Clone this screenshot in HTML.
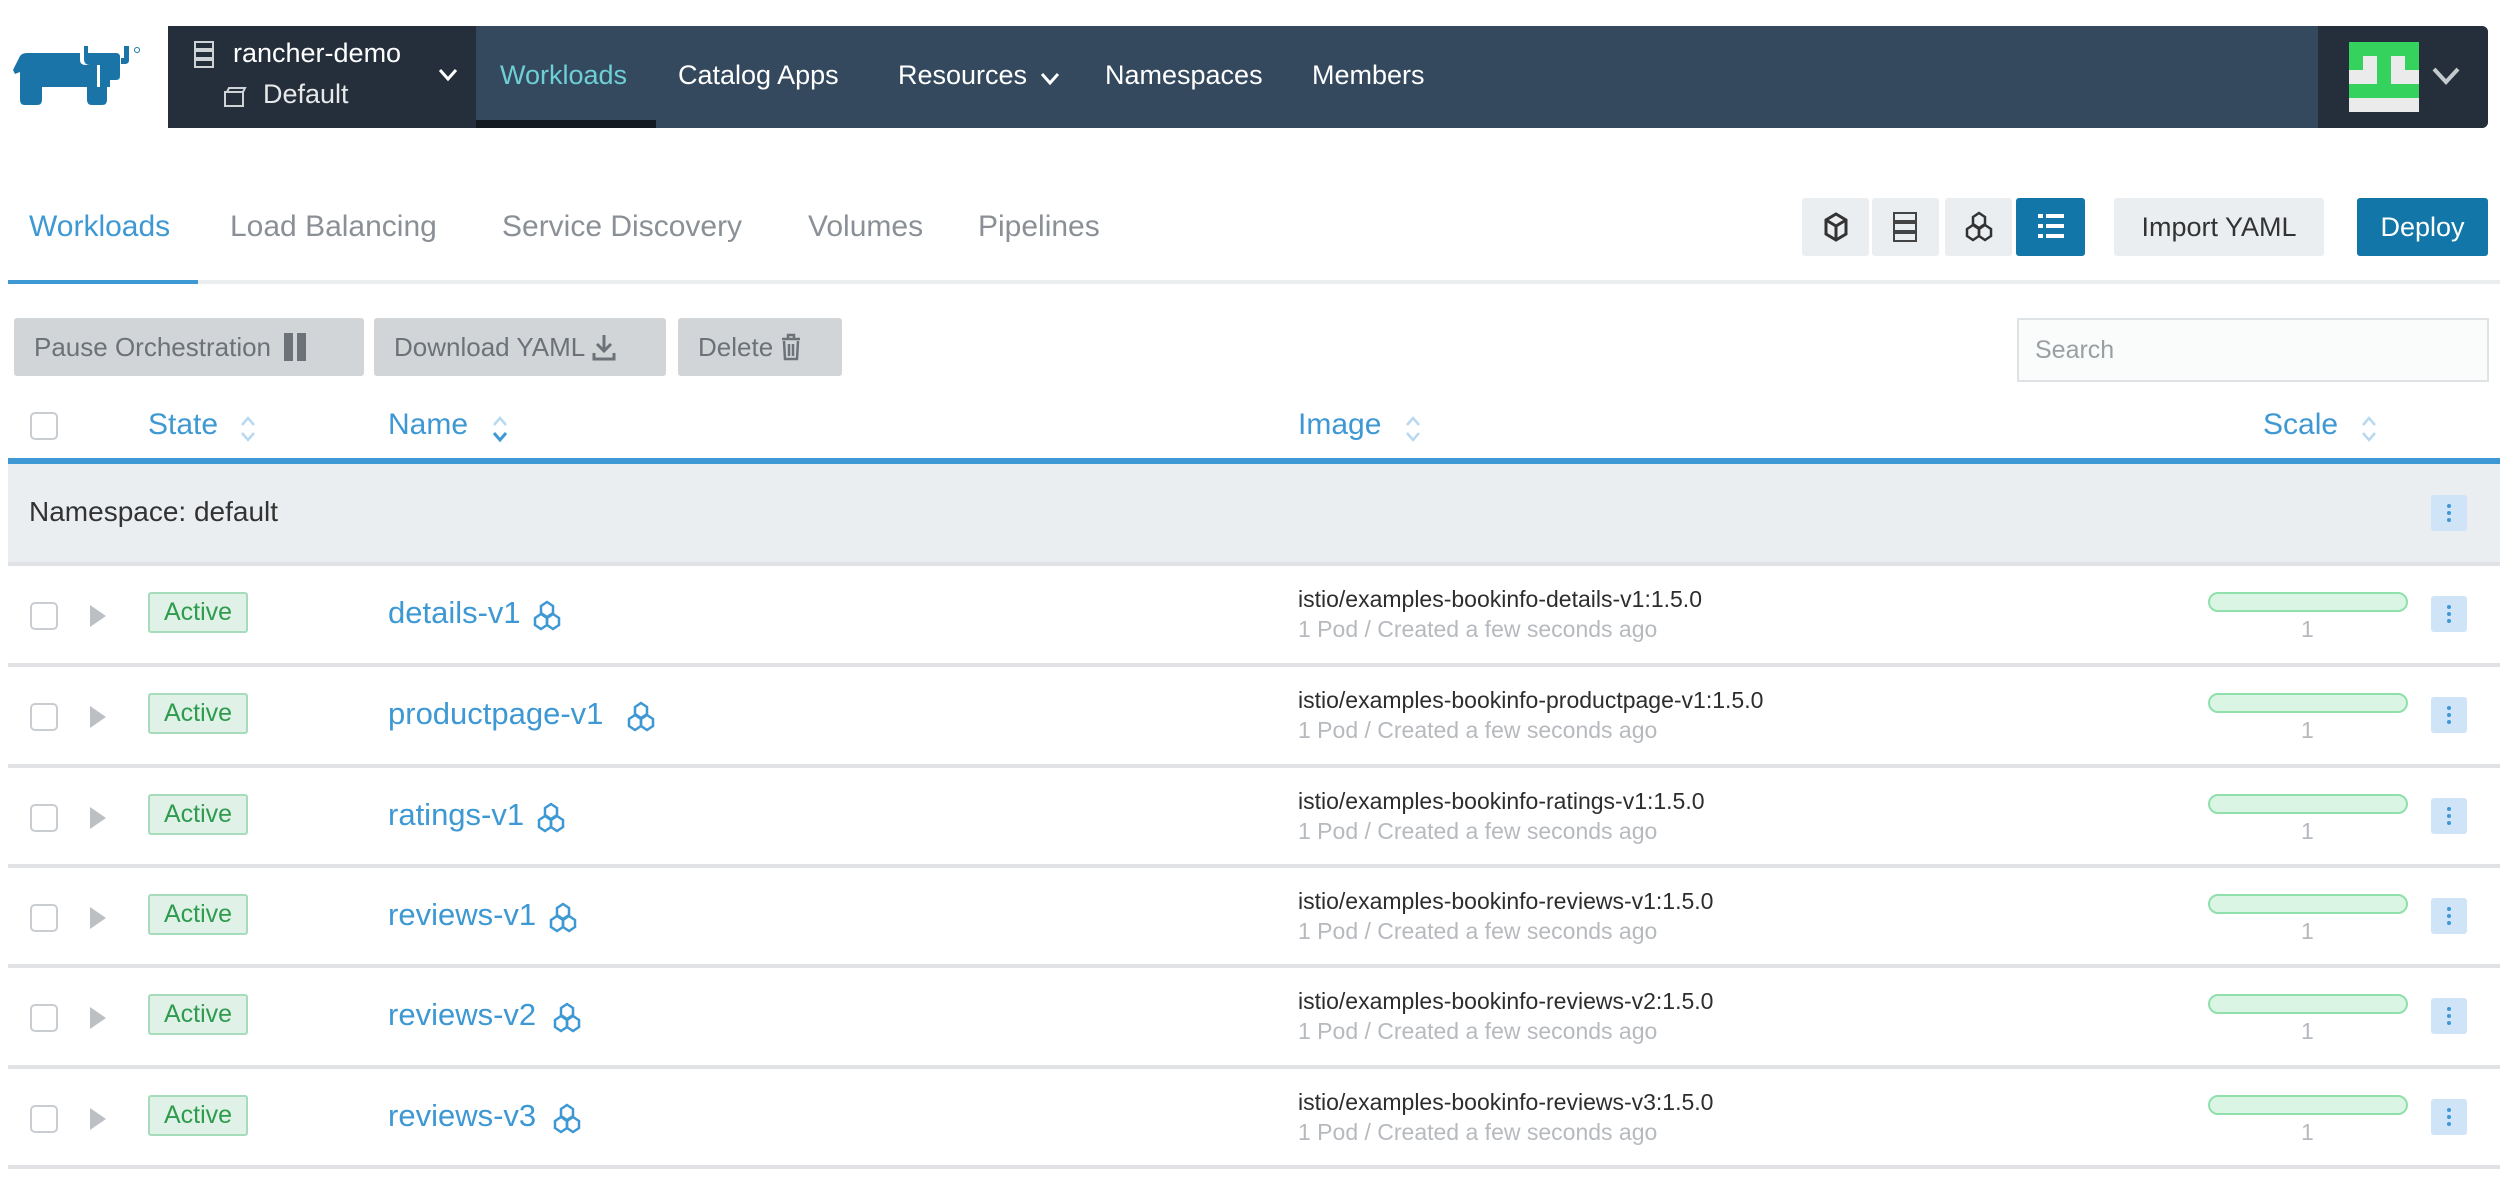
<!DOCTYPE html>
<html><head><meta charset="utf-8"><style>
*{box-sizing:border-box;margin:0;padding:0}
body{width:2500px;height:1186px;background:#fff;font-family:"Liberation Sans",sans-serif;position:relative;overflow:hidden}
.a{position:absolute;white-space:nowrap}
.nav{color:#fff;font-size:27px}
.tab{font-size:30px;color:#8b9096;top:210px}
.btn{background:#d2d5d8;border-radius:3px;color:#6c7278;font-size:26px;top:318px;height:58px;line-height:58px;padding-left:20px}
.hd{font-size:30px;color:#3d98d3;top:408px}
.cb{width:28px;height:28px;border:2px solid #c9cdd1;border-radius:5px;background:#fff}
.sep{left:8px;right:0;height:4px;background:#e0e2e5}
.badge{background:#e0f2e7;border:2px solid #a6dcbb;color:#2e9b4e;font-size:25px;border-radius:3px;width:100px;height:41px;line-height:37px;text-align:center}
.name{font-size:31px;color:#3d98d3}
.img{font-size:23px;color:#2d2d2d}
.sub{font-size:23px;color:#b6babe}
.bar{width:200px;height:20px;border:2px solid #8fe0ab;background:#dbf5e4;border-radius:10px}
.menu{width:36px;height:36px;background:#cfe4f6;border-radius:3px}
.menu i{position:absolute;left:16px;width:4px;height:4px;border-radius:2px;background:#3d98d3}
.tri{width:0;height:0;border-left:16px solid #bcc0c4;border-top:11px solid transparent;border-bottom:11px solid transparent}
.ic{background:#ebeef0;top:198px;height:58px;width:67px;border-radius:3px}
</style></head><body>
<!-- logo -->
<svg class="a" style="left:0;top:30px" width="160" height="90" viewBox="0 0 160 90">
<path fill="#1a74a8" d="M13 40 L20 26 Q22 23 27 23 L80 23 L80 30 Q80 35 86 35 L97 35 L97 57 L107 57 L107 70 Q107 75 102 75 L92 75 Q87 75 87 70 L87 57 L42 57 L42 70 Q42 75 37 75 L25 75 Q20 75 20 70 L20 42 L15 44 Z"/>
<path fill="#1a74a8" d="M84 16 L88 16 L88 23 L116 23 Q120 23 120 27 L120 46 Q120 50 116 50 L110 50 L110 57 L100 57 L100 35 L90 35 Q84 35 84 29 Z"/>
<path fill="#1a74a8" d="M124 16 L129 16 L129 30 Q129 34 125 34 L121 34 L121 28 L124 28 Z"/>
<circle cx="137" cy="20" r="2.5" fill="none" stroke="#1a74a8" stroke-width="1"/>
</svg>
<!-- navbar -->
<div class="a" style="left:168px;top:26px;width:2320px;height:102px;background:#34495e;border-radius:0 6px 6px 0"></div>
<div class="a" style="left:168px;top:26px;width:308px;height:102px;background:#242f3b"></div>
<div class="a" style="left:476px;top:120px;width:180px;height:8px;background:#141a21"></div>
<div class="a" style="left:2318px;top:26px;width:170px;height:102px;background:#242f3b;border-radius:0 6px 6px 0"></div>
<svg class="a" style="left:193px;top:40px" width="22" height="30" viewBox="0 0 22 30"><g fill="none" stroke="#cfd3d6" stroke-width="2"><rect x="2" y="2" width="18" height="7"/><rect x="2" y="11" width="18" height="7"/><rect x="2" y="20" width="18" height="7"/></g></svg>
<div class="a nav" style="left:233px;top:38px">rancher-demo</div>
<svg class="a" style="left:222px;top:86px" width="26" height="22" viewBox="0 0 26 22"><path d="M3 6 L3 20 L21 20 L21 6 Z M5 6 L7 2 L23 2 L21 6" fill="none" stroke="#cfd3d6" stroke-width="2"/></svg>
<div class="a nav" style="left:263px;top:79px;color:#e6e8ea">Default</div>
<svg class="a" style="left:438px;top:68px" width="20" height="14"><path d="M2 2 L10 11 L18 2" fill="none" stroke="#fff" stroke-width="3"/></svg>
<div class="a nav" style="left:500px;top:60px;color:#6ecfd6">Workloads</div>
<div class="a nav" style="left:678px;top:60px">Catalog Apps</div>
<div class="a nav" style="left:898px;top:60px">Resources</div>
<svg class="a" style="left:1040px;top:72px" width="20" height="14"><path d="M2 2 L10 11 L18 2" fill="none" stroke="#fff" stroke-width="3"/></svg>
<div class="a nav" style="left:1105px;top:60px">Namespaces</div>
<div class="a nav" style="left:1312px;top:60px">Members</div>
<div class="a" style="left:2349px;top:42px;width:70px;height:70px;background:#35d25e"></div>
<div class="a" style="left:2349px;top:98px;width:70px;height:14px;background:#ebebeb"></div>
<div class="a" style="left:2349px;top:70px;width:70px;height:14px;background:#ebebeb"></div>
<div class="a" style="left:2363px;top:56px;width:14px;height:28px;background:#ebebeb"></div>
<div class="a" style="left:2391px;top:56px;width:14px;height:28px;background:#ebebeb"></div>
<div class="a" style="left:2377px;top:70px;width:14px;height:14px;background:#35d25e"></div>
<svg class="a" style="left:2431px;top:66px" width="30" height="20"><path d="M3 3 L15 16 L27 3" fill="none" stroke="#c4c9cd" stroke-width="4"/></svg>
<!-- tabs -->
<div class="a tab" style="left:29px;color:#3d98d3">Workloads</div>
<div class="a tab" style="left:230px">Load Balancing</div>
<div class="a tab" style="left:502px">Service Discovery</div>
<div class="a tab" style="left:808px">Volumes</div>
<div class="a tab" style="left:978px">Pipelines</div>
<div class="a" style="left:8px;top:280px;width:2492px;height:4px;background:#ebeeef"></div>
<div class="a" style="left:8px;top:280px;width:190px;height:4px;background:#3d98d3"></div>
<!-- right buttons -->
<div class="a ic" style="left:1802px"></div>
<svg class="a" style="left:1822px;top:211px" width="28" height="32" viewBox="0 0 28 32"><path d="M14 3 L24 9 L24 23 L14 29 L4 23 L4 9 Z M4 9 L14 15 L24 9 M14 15 L14 29" fill="none" stroke="#333" stroke-width="3"/></svg>
<div class="a ic" style="left:1872px"></div>
<svg class="a" style="left:1892px;top:211px" width="26" height="32" viewBox="0 0 26 32"><g fill="none" stroke="#444" stroke-width="2"><rect x="2" y="2" width="22" height="8"/><rect x="2" y="12" width="22" height="8"/><rect x="2" y="22" width="22" height="8"/></g></svg>
<div class="a ic" style="left:1945px"></div>
<svg class="a" style="left:1964px;top:211px" width="30" height="32" viewBox="0 0 30 32"><g fill="none" stroke="#333" stroke-width="2.5"><path d="M15 2 L21 6 L21 13 L15 17 L9 13 L9 6 Z"/><path d="M9 14 L15 18 L15 25 L9 29 L3 25 L3 18 Z"/><path d="M21 14 L27 18 L27 25 L21 29 L15 25 L15 18 Z"/></g></svg>
<div class="a" style="left:2016px;top:198px;width:69px;height:58px;background:#1277a8;border-radius:3px"></div>
<svg class="a" style="left:2036px;top:212px" width="30" height="30" viewBox="0 0 30 30"><g fill="#fff"><rect x="2" y="2" width="5" height="4"/><rect x="10" y="2" width="18" height="4"/><rect x="2" y="12" width="5" height="4"/><rect x="10" y="12" width="18" height="4"/><rect x="2" y="22" width="5" height="4"/><rect x="10" y="22" width="18" height="4"/></g></svg>
<div class="a" style="left:2114px;top:198px;width:210px;height:58px;background:#ebeef0;border-radius:3px;font-size:27px;color:#333;line-height:58px;text-align:center">Import YAML</div>
<div class="a" style="left:2357px;top:198px;width:131px;height:58px;background:#1277a8;border-radius:3px;font-size:27px;color:#fff;line-height:58px;text-align:center">Deploy</div>
<!-- action buttons -->
<div class="a btn" style="left:14px;width:350px">Pause Orchestration <span style="display:inline-block;width:9px;height:28px;background:#6c7278;vertical-align:-5px;margin-left:6px"></span><span style="display:inline-block;width:9px;height:28px;background:#6c7278;vertical-align:-5px;margin-left:4px"></span></div>
<div class="a btn" style="left:374px;width:292px">Download YAML <svg width="24" height="28" style="vertical-align:-5px"><path d="M12 2 L12 18 M5 11 L12 18 L19 11 M2 20 L2 26 L22 26 L22 20" fill="none" stroke="#6c7278" stroke-width="3"/></svg></div>
<div class="a btn" style="left:678px;width:164px">Delete <svg width="22" height="28" style="vertical-align:-5px"><path d="M2 6 L20 6 M8 6 L8 2 L14 2 L14 6 M4 8 L5 26 L17 26 L18 8 M9 11 L9 23 M13 11 L13 23" fill="none" stroke="#6c7278" stroke-width="2.5"/></svg></div>
<div class="a" style="left:2017px;top:318px;width:472px;height:64px;border:2px solid #dfe3e6;background:#fafbfb;font-size:25px;color:#9a9fa4;padding:16px 16px">Search</div>
<!-- header -->
<div class="a cb" style="left:30px;top:412px"></div>
<div class="a hd" style="left:148px">State</div>
<div class="a hd" style="left:388px">Name</div>
<div class="a hd" style="left:1298px">Image</div>
<div class="a hd" style="left:2263px">Scale</div>
<svg class="a" style="left:240px;top:414px" width="16" height="30"><path d="M2 11 L8 4 L14 11 M2 19 L8 26 L14 19" fill="none" stroke="#b8d9f0" stroke-width="2.5"/></svg>
<svg class="a" style="left:492px;top:414px" width="16" height="30"><path d="M2 11 L8 4 L14 11" fill="none" stroke="#b8d9f0" stroke-width="2.5"/><path d="M2 19 L8 26 L14 19" fill="none" stroke="#3d98d3" stroke-width="3"/></svg>
<svg class="a" style="left:1405px;top:414px" width="16" height="30"><path d="M2 11 L8 4 L14 11 M2 19 L8 26 L14 19" fill="none" stroke="#b8d9f0" stroke-width="2.5"/></svg>
<svg class="a" style="left:2361px;top:414px" width="16" height="30"><path d="M2 11 L8 4 L14 11 M2 19 L8 26 L14 19" fill="none" stroke="#b8d9f0" stroke-width="2.5"/></svg>
<div class="a" style="left:8px;top:458px;width:2492px;height:6px;background:#3d98d3"></div>
<div class="a" style="left:8px;top:464px;width:2492px;height:98px;background:#ebeef0"></div>
<div class="a" style="left:29px;top:496px;font-size:28px;color:#333">Namespace: default</div>
<div class="a menu" style="left:2431px;top:495px"><i style="top:9px"></i><i style="top:16px"></i><i style="top:23px"></i></div>

<div id="rows"></div>
<script>
var tops=[562,663,764,864,964,1065];
var names=["details-v1","productpage-v1","ratings-v1","reviews-v1","reviews-v2","reviews-v3"];
var nw=[136,230,140,152,156,156];
var h="";
for(var i=0;i<6;i++){var t=tops[i];
h+='<div class="a sep" style="top:'+t+'px"></div>';
h+='<div class="a cb" style="left:30px;top:'+(t+40)+'px"></div>';
h+='<div class="a tri" style="left:90px;top:'+(t+43)+'px"></div>';
h+='<div class="a badge" style="left:148px;top:'+(t+30)+'px">Active</div>';
h+='<div class="a name" style="left:388px;top:'+(t+33)+'px">'+names[i]+'</div>';
h+='<svg class="a" style="left:'+(388+nw[i]+8)+'px;top:'+(t+38)+'px" width="30" height="32" viewBox="0 0 30 32"><g fill="none" stroke="#3d98d3" stroke-width="2.5"><path d="M15 2 L21 6 L21 13 L15 17 L9 13 L9 6 Z"/><path d="M9 14 L15 18 L15 25 L9 29 L3 25 L3 18 Z"/><path d="M21 14 L27 18 L27 25 L21 29 L15 25 L15 18 Z"/></g></svg>';
h+='<div class="a img" style="left:1298px;top:'+(t+24)+'px">istio/examples-bookinfo-'+names[i]+':1.5.0</div>';
h+='<div class="a sub" style="left:1298px;top:'+(t+54)+'px">1 Pod / Created a few seconds ago</div>';
h+='<div class="a bar" style="left:2208px;top:'+(t+30)+'px"></div>';
h+='<div class="a sub" style="left:2301px;top:'+(t+54)+'px">1</div>';
h+='<div class="a menu" style="left:2431px;top:'+(t+34)+'px"><i style="top:9px"></i><i style="top:16px"></i><i style="top:23px"></i></div>';
}
h+='<div class="a sep" style="top:1165px"></div>';
document.getElementById("rows").innerHTML=h;
</script>
</body></html>
